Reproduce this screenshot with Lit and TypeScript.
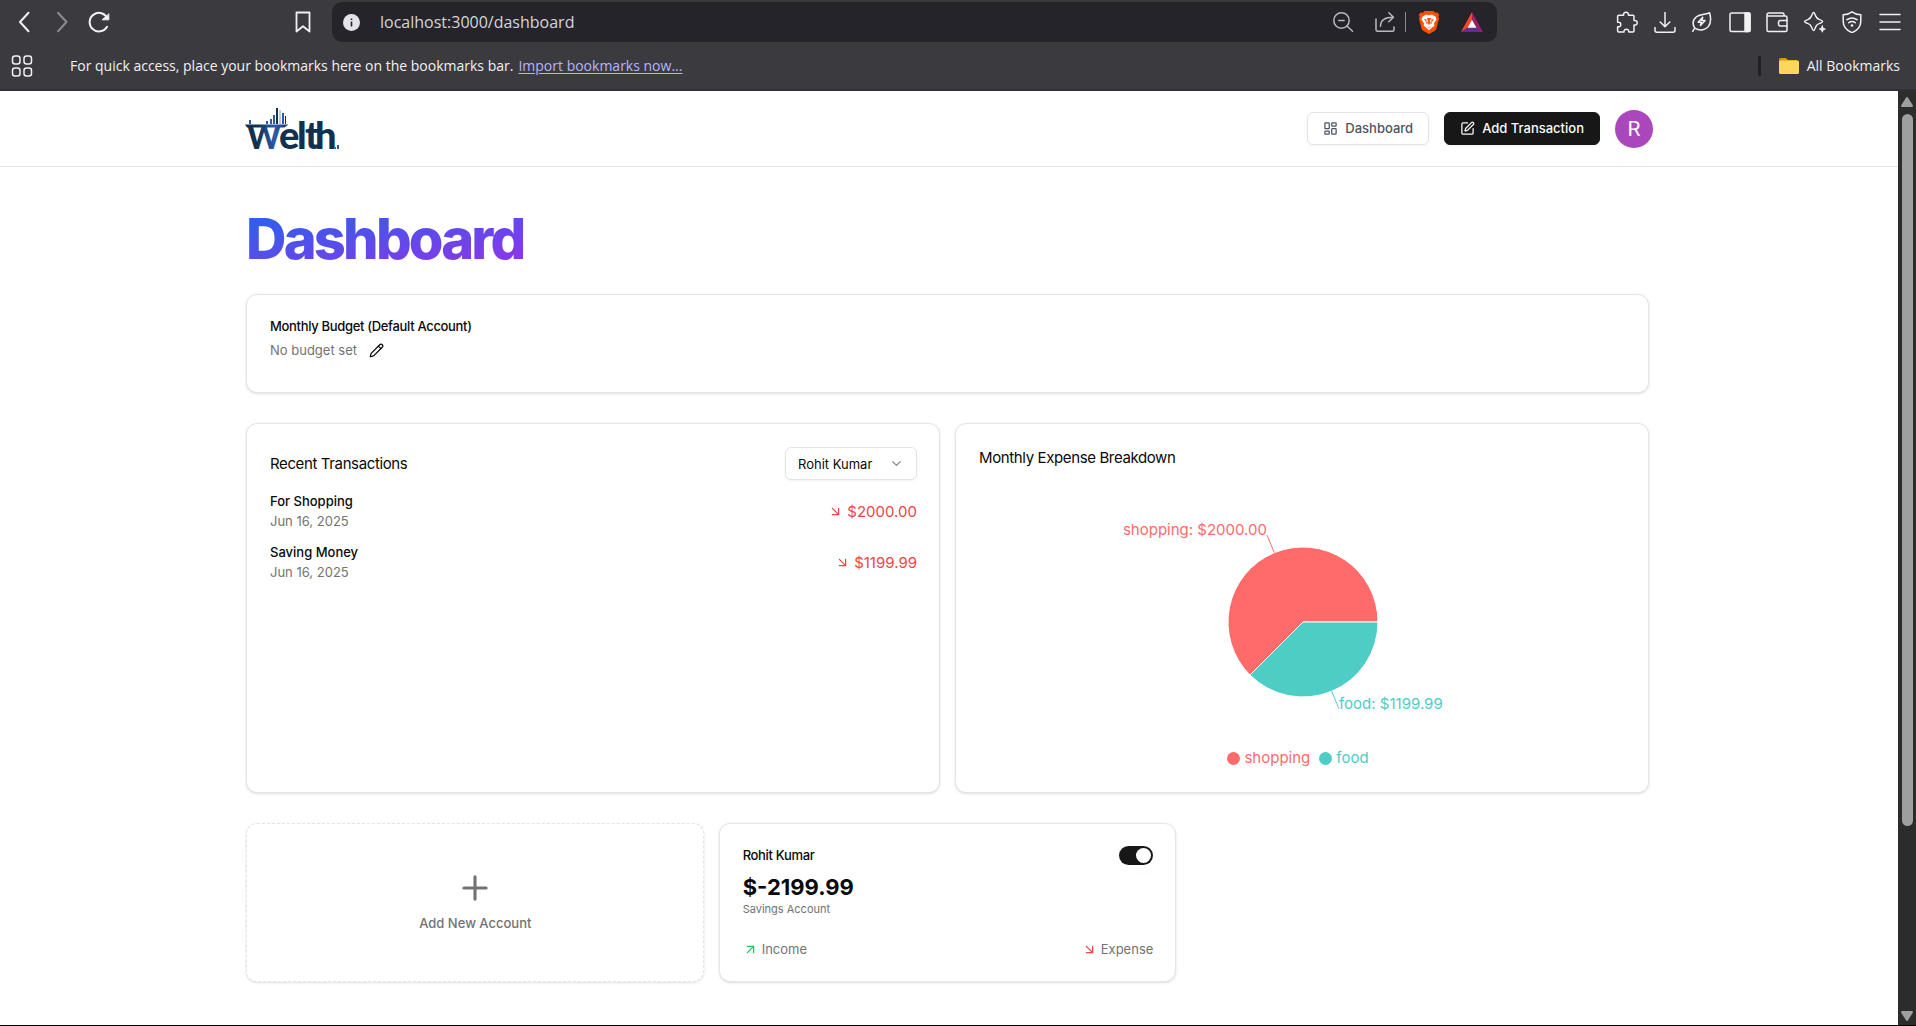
import { LitElement, html, svg, css } from "lit";
import { customElement, property, state } from "lit/decorators.js";

const resets = css`
  *,
  *::before,
  *::after {
    box-sizing: border-box;
  }
  h1,
  h2,
  p,
  ul {
    margin: 0;
    padding: 0;
  }
  ul {
    list-style: none;
  }
  svg {
    display: block;
    flex: none;
  }
  button,
  select,
  input {
    font: inherit;
    color: inherit;
    margin: 0;
  }
`;

/* ---------- Icons ---------- */

const outline = (size: number, body: unknown, width = 2) => html`<svg
  width=${size}
  height=${size}
  viewBox="0 0 24 24"
  fill="none"
  stroke="currentColor"
  stroke-width=${width}
  stroke-linecap="round"
  stroke-linejoin="round"
  aria-hidden="true"
>
  ${body}
</svg>`;

const chrome = (body: unknown, size = 22) => html`<svg
  width=${size}
  height=${size}
  viewBox="0 0 22 22"
  fill="none"
  stroke="currentColor"
  stroke-width="1.5"
  stroke-linecap="round"
  stroke-linejoin="round"
  aria-hidden="true"
>
  ${body}
</svg>`;

const gridIcon = svg`<rect x="3" y="3" width="7" height="9" rx="1"/><rect x="14" y="3" width="7" height="5" rx="1"/><rect x="14" y="12" width="7" height="9" rx="1"/><rect x="3" y="16" width="7" height="5" rx="1"/>`;
const penBox = svg`<path d="M12 3H5a2 2 0 0 0-2 2v14a2 2 0 0 0 2 2h14a2 2 0 0 0 2-2v-7"/><path d="M18.375 2.625a1 1 0 0 1 3 3l-9.013 9.014a2 2 0 0 1-.853.505l-2.873.84a.5.5 0 0 1-.62-.62l.84-2.873a2 2 0 0 1 .506-.852z"/>`;
const pencil = svg`<path d="M21.174 6.812a1 1 0 0 0-3.986-3.987L3.842 16.174a2 2 0 0 0-.5.83l-1.321 4.352a.5.5 0 0 0 .623.622l4.353-1.32a2 2 0 0 0 .83-.497z"/><path d="m15 5 4 4"/>`;
const arrowDown = svg`<path d="m7 7 10 10"/><path d="M17 7v10H7"/>`;
const arrowUp = svg`<path d="M7 7h10v10"/><path d="M7 17 17 7"/>`;
const chevronDown = svg`<path d="m6 9 6 6 6-6"/>`;
const plus = svg`<path d="M5 12h14"/><path d="M12 5v14"/>`;

const toolIcons: Array<[string, unknown]> = [
  [
    "Extensions",
    svg`<path d="M3 4.2h4.600c-.3-2 .7-3 2.400-3s2.700 1 2.400 3H17a1 1 0 0 1 1 1v4.300c2-.3 3.200.6 3.200 2.200S20 14.200 18 13.900v6.200a1 1 0 0 1-1 1h-4.200c.2-1.900-.8-2.800-2.400-2.800s-2.600.9-2.400 2.800H3a1.400 1.400 0 0 1-1.400-1.400v-3.900c2.200.3 3.200-.8 3.200-2.300s-1-2.600-3.200-2.300V5.600A1.400 1.400 0 0 1 3 4.200z"/>`,
  ],
  [
    "Downloads",
    svg`<path d="M11 1.500v14M6.200 11l4.800 4.700 4.800-4.700M1 16.500v2.700a2 2 0 0 0 2 2h16a2 2 0 0 0 2-2v-2.700"/>`,
  ],
  [
    "Energy saver",
    svg`<path d="M1.800 20.300c.5-1.600 1.200-2.300 2-3.100C1.200 13 2 8.700 5.200 6 8.500 3.200 13 4.100 18.600 1.700c1.300 4.700 1.800 10-1.300 13.900-3.100 3.800-8.700 4.500-13.500 1.600"/><path d="M11.700 6.200 7.200 11.300h3.100l-.9 3.300 4.700-5.100h-3.300z"/>`,
  ],
  [
    "Sidebar",
    svg`<rect x="1" y="2" width="20" height="18.500" rx="1.500"/><path d="M16 2h4a1 1 0 0 1 1 1v16.500a1 1 0 0 1-1 1h-4z" fill="currentColor"/>`,
  ],
  [
    "Wallet",
    svg`<path d="M18 5V3.500A1.500 1.500 0 0 0 16.500 2H2.800A1.800 1.800 0 0 0 1 3.800V19a1.500 1.500 0 0 0 1.500 1.500h17A1.500 1.500 0 0 0 21 19V6.500A1.500 1.500 0 0 0 19.500 5H2"/><path d="M21 9.500h-6.500a2 2 0 0 0-2 2V13a2 2 0 0 0 2 2H21"/>`,
  ],
  [
    "Assistant",
    svg`<path d="M9.600 1.500c.9 0 1.200 1 1.800 3.100.8 2.500 1.600 3.200 4.100 4 2 .6 3.100.9 3.100 1.900s-1 1.200-3.100 1.900c-2.500.8-3.300 1.500-4.100 4-.6 2.100-.9 3.100-1.800 3.100s-1.200-1-1.900-3.100c-.8-2.500-1.500-3.200-4-4-2.100-.7-3.100-.9-3.100-1.900s1-1.300 3.100-1.900c2.500-.8 3.200-1.500 4-4 .7-2.100 1-3.100 1.900-3.100z"/><path d="M18.300 15c.5 2 .9 2.500 3 3.100-2.100.6-2.500 1.100-3 3.100-.6-2-1-2.500-3-3.100 2-.6 2.400-1.100 3-3.100z" fill="currentColor" stroke-width="1"/>`,
  ],
  [
    "Shield",
    svg`<path d="M11 .8c2.500 1.900 5.300 2.800 8.800 3v6.500c0 5.300-3.500 9.200-8.800 11.300C5.700 19.500 2.200 15.600 2.200 10.300V3.800c3.500-.2 6.300-1.100 8.800-3z"/><path d="M6 8.700c3.200-2.300 6.800-2.300 10 0M7.800 11.700c2.100-1.500 4.300-1.500 6.400 0"/><circle cx="11" cy="14.500" r="1.300" fill="currentColor" stroke="none"/>`,
  ],
  ["Menu", svg`<path d="M1 3.500h20M1 11h20M1 18.500h20"/>`],
];

/* ---------- Browser frame ---------- */

@customElement("browser-bar")
export class BrowserBar extends LitElement {
  static styles = [
    resets,
    css`
      :host {
        display: block;
        background: #3b3a3f;
        border-bottom: 2px solid #302f35;
        color: #f1f1f4;
        font-family: "Open Sans", "Noto Sans", sans-serif;
      }
      .toolbar {
        display: flex;
        align-items: center;
        height: 42px;
        padding-top: 2px;
      }
      .plain {
        display: grid;
        place-items: center;
        padding: 0;
        border: 0;
        background: none;
      }
      .nav {
        display: flex;
        align-items: center;
        gap: 15px;
        width: 332px;
        padding: 0 18px 0 14px;
      }
      .dim {
        color: #8b8a90;
      }
      .push {
        margin-left: auto;
      }
      .address {
        flex: 1;
        min-width: 0;
        display: flex;
        align-items: center;
        height: 40px;
        padding: 0 13px 0 11px;
        border-radius: 10px;
        background: #25242a;
        color: #b9b9bf;
      }
      .url {
        flex: 1;
        min-width: 0;
        padding: 0;
        margin-left: 20px;
        border: 0;
        outline: 0;
        background: none;
        font-size: 16px;
        line-height: 24px;
        color: #d5d5da;
      }
      .zoomed {
        margin-right: 20px;
      }
      .rule {
        width: 1px;
        height: 20px;
        margin: 0 12px 0 9px;
        background: #8b8a90;
      }
      .brave {
        margin-right: 20px;
      }
      .tools {
        display: flex;
        justify-content: space-between;
        width: 285px;
        margin: 0 15px 0 119px;
      }
      .bookmarks {
        display: flex;
        align-items: center;
        height: 47px;
        padding: 0 16px 0 11px;
        font-size: 14px;
        line-height: 20px;
      }
      .hint {
        margin-left: 37px;
      }
      .import {
        margin-left: 5px;
        color: #b6b5fb;
        text-underline-offset: 2px;
      }
      .bar {
        width: 3px;
        height: 20px;
        margin-left: auto;
        border-radius: 1px;
        background: #212026;
      }
      .all {
        display: flex;
        align-items: center;
        gap: 8px;
        margin-left: 18px;
      }
    `,
  ];

  render() {
    return html`
      <div class="toolbar">
        <div class="nav">
          <button class="plain" aria-label="Back">
            ${chrome(svg`<path d="M14.500 1.800 6 11l8.500 9.200" stroke-width="2"/>`)}
          </button>
          <button class="plain dim" aria-label="Forward">
            ${chrome(svg`<path d="M7 1.800 15.500 11 7 20.200" stroke-width="2"/>`)}
          </button>
          <button class="plain" aria-label="Reload">
            ${chrome(
              svg`<path d="M19 15.800A9.300 9.300 0 1 1 19.500 7.500" stroke-width="2"/><path d="M14.500 8.800h6.300V3.200z" fill="currentColor" stroke-width="1"/>`
            )}
          </button>
          <button class="plain push" aria-label="Bookmark this page">
            ${chrome(svg`<path d="M4.500 1.500h13v19L11 15.300l-6.500 5.200z" stroke-width="1.800"/>`)}
          </button>
        </div>
        <div class="address">
          <svg width="17" height="17" viewBox="0 0 17 17" aria-hidden="true">
            <circle cx="8.500" cy="8.500" r="8.500" fill="#e4e3ea" />
            <path d="M8.500 7.500v5M8.500 4.500v1.400" stroke="#25242a" stroke-width="1.600" />
          </svg>
          <input class="url" aria-label="Address" value="localhost:3000/dashboard" />
          <button class="plain zoomed" aria-label="Zoom">
            ${chrome(svg`<circle cx="9.500" cy="9.500" r="7.700"/><path d="M6.800 9.500h5.400M15 15l5.500 5.200"/>`)}
          </button>
          <button class="plain" aria-label="Share">
            ${chrome(
              svg`<path d="M2 8v10.700A1.500 1.500 0 0 0 3.500 20.200h15a1.500 1.500 0 0 0 1.500-1.500V16M6.500 15.200c0-5.700 3.400-8.900 12.800-8.900M14.800 1.800l4.700 4.500-4.700 4.500"/>`
            )}
          </button>
          <span class="rule"></span>
          <button class="plain brave" aria-label="Brave Shields">
            <svg width="22" height="24" viewBox="0 0 22 24" aria-hidden="true">
              <path
                fill="#ff5000"
                d="M6.500 1h9l1.600 1.800 2.400-.3 1.600 2.300-.7 2 .6 1.900-2.500 9.500c-.4 1.500-1.300 2.300-2.500 3.100L11 24l-5-2.700c-1.200-.8-2.100-1.600-2.500-3.100L1 8.700l.6-1.900-.7-2 1.600-2.300 2.400.3z"
              />
              <path
                fill="#fff"
                d="M11 5.300l3-.8 3.500 2.300 1 2.700-2.600 4 .5 2.200-2.300 1.700L11 20.200l-3.100-2.800-2.300-1.700.5-2.200-2.600-4 1-2.700L8 4.500z"
              />
              <path
                fill="#ff5000"
                d="M5.800 9l3 .7-.5 1.200 1.200 2 .3-2.400-.9-2.500h4.200l-.9 2.500.3 2.400 1.200-2-.5-1.200 3-.7-2.600 3.200.2 1.500-2-.3L11 15.400l-.8-2-2 .3.2-1.500zM8.700 16.500l2.300 1.200 2.300-1.200-2.300 1.900z"
              />
            </svg>
          </button>
          <button class="plain" aria-label="Brave Rewards">
            <svg width="24" height="22" viewBox="0 0 24 22" aria-hidden="true">
              <path fill="#ff4724" d="M12 1v8L7.500 17 1 21z" />
              <path fill="#9e1f63" d="M12 1v8l4.500 8 6.500 4z" />
              <path fill="#662d91" d="M1 21l6.500-4.500h9L23 21z" />
              <path fill="#fff" d="M12 8.700 7.600 16.800h8.800z" />
            </svg>
          </button>
        </div>
        <div class="tools">
          ${toolIcons.map(
            ([name, body]) => html`<button class="plain" aria-label=${name}>${chrome(body)}</button>`
          )}
        </div>
      </div>
      <div class="bookmarks">
        <button class="plain" aria-label="Apps">
          ${chrome(
            svg`<rect x="1.500" y="1" width="7.500" height="8" rx="2.500"/><rect x="13" y="1" width="7.500" height="8" rx="2.500"/><rect x="1.500" y="13" width="7.500" height="8" rx="2.500"/><rect x="13" y="13" width="7.500" height="8" rx="2.500"/>`
          )}
        </button>
        <span class="hint">For quick access, place your bookmarks here on the bookmarks bar.</span>
        <a class="import" href="#import">Import bookmarks now...</a>
        <span class="bar"></span>
        <span class="all">
          <svg width="20" height="16" viewBox="0 0 20 16" aria-hidden="true">
            <path fill="#d9960f" d="M1.500 0h5.300L9 2h9v5H0V1.500A1.500 1.500 0 0 1 1.500 0z" />
            <rect y="2.500" width="20" height="13.500" rx="1.500" fill="#ffd65c" />
          </svg>
          All Bookmarks
        </span>
      </div>
    `;
  }
}

@customElement("scroll-rail")
export class ScrollRail extends LitElement {
  static styles = [
    resets,
    css`
      :host {
        display: flex;
        flex-direction: column;
        align-items: center;
        gap: 7px;
        width: 18px;
        padding: 6px 0 4px;
        background: #2c2c2c;
      }
      .track {
        flex: 1;
        display: flex;
        flex-direction: column;
        width: 11px;
      }
      .thumb {
        height: 80%;
        border-radius: 6px;
        background: #9f9f9f;
      }
    `,
  ];

  render() {
    return html`
      <svg width="12" height="10" viewBox="0 0 12 10"><path fill="#9f9f9f" d="M5 .7a1.200 1.200 0 0 1 2 0l4.800 7.600q.5 1.700-1 1.700H1.200Q-.3 10 .2 8.300z" /></svg>
      <div class="track"><div class="thumb"></div></div>
      <svg width="12" height="10" viewBox="0 0 12 10"><path fill="#9f9f9f" d="M5 9.300a1.200 1.200 0 0 0 2 0l4.800-7.600Q12.300 0 10.800 0H1.200Q-.3 0 .2 1.700z" /></svg>
    `;
  }
}

/* ---------- Site header ---------- */

@customElement("site-header")
export class SiteHeader extends LitElement {
  static styles = [
    resets,
    css`
      :host {
        display: block;
        border-bottom: 1px solid #e5e5e5;
      }
      .inner {
        display: flex;
        align-items: center;
        justify-content: space-between;
        max-width: 1410px;
        height: 75px;
        margin: 0 auto;
        padding: 0 1px;
      }
      .actions {
        display: flex;
        align-items: center;
        gap: 15px;
      }
      .logo {
        overflow: visible;
      }
      .btn {
        display: flex;
        align-items: center;
        gap: 7px;
        height: 33px;
        padding: 0 15px;
        border: 1px solid #e5e5e5;
        border-radius: 6px;
        background: #fff;
        box-shadow: 0 1px 2px rgba(0, 0, 0, 0.05);
        color: #4b5563;
        font-size: 13px;
        font-weight: 500;
        line-height: 19px;
        text-decoration: none;
      }
      .dark {
        border-color: #171717;
        background: #171717;
        color: #fafafa;
      }
      .avatar {
        display: grid;
        place-items: center;
        width: 38px;
        height: 38px;
        padding: 0;
        border: 0;
        border-radius: 50%;
        background: #ab47bc;
        color: #fff;
        font-family: Roboto, sans-serif;
        font-size: 21px;
      }
    `,
  ];

  render() {
    return html`
      <div class="inner">
        <a href="#home" aria-label="Welth home">
          <svg class="logo" width="96" height="60" viewBox="0 -8 96 60">
            <defs>
              <linearGradient id="w" gradientUnits="userSpaceOnUse" x1="0" y1="0" x2="40" y2="0">
                <stop offset="0.3" stop-color="#12304f" />
                <stop offset="0.75" stop-color="#2c5ba8" />
                <stop offset="1" stop-color="#1d3f74" />
              </linearGradient>
            </defs>
            <g fill="#2c5ba8">
              <rect x="4" y="13" width="2" height="4" />
              <rect x="21" y="14" width="2" height="3" />
              <rect x="25" y="12" width="2" height="5" />
              <rect x="28" y="8" width="2" height="9" />
              <rect x="31" y="1" width="2" height="16" fill="#12304f" />
              <rect x="34" y="3" width="2" height="14" fill="#c3c9d6" />
              <rect x="37" y="6" width="2" height="11" />
              <rect x="40" y="9" width="1" height="8" fill="#12304f" />
              <rect x="92" y="38" width="2" height="4" />
              <rect x="90" y="40" width="1" height="2" />
            </g>
            <path fill="url(#w)" d="M0 17.500h43.500l-4 3H2z" />
            <g font-family="Lato, sans-serif" font-weight="900" fill="#12304f">
              <text x="2" y="42" font-size="34" fill="url(#w)"><tspan font-size="32">W</tspan></text>
              <text x="34 52 60 70" y="42" font-size="38">elth</text>
            </g>
          </svg>
        </a>
        <nav class="actions">
          <a class="btn" href="#dashboard">${outline(15, gridIcon)}Dashboard</a>
          <a class="btn dark" href="#create">${outline(15, penBox)}Add Transaction</a>
          <button class="avatar" aria-label="Account menu">R</button>
        </nav>
      </div>
    `;
  }
}

/* ---------- Expense chart ---------- */

interface Slice {
  name: string;
  value: number;
  color: string;
}

@customElement("expense-pie")
export class ExpensePie extends LitElement {
  @property({ attribute: false }) slices: Slice[] = [];

  static styles = [
    resets,
    css`
      :host {
        display: flex;
        flex-direction: column;
        align-items: center;
      }
      .label {
        font-size: 15px;
      }
      .legend {
        display: flex;
        line-height: 22px;
      }
      .item {
        display: flex;
        align-items: center;
        gap: 4px;
        padding-right: 9px;
      }
    `,
  ];

  private point(deg: number, r: number) {
    const a = (deg * Math.PI) / 180;
    return [Math.cos(a) * r, -Math.sin(a) * r];
  }

  render() {
    const total = this.slices.reduce((sum, s) => sum + s.value, 0);
    let from = 0;
    const parts = this.slices.map((s) => {
      const to = from + (s.value / total) * 360;
      const mid = (from + to) / 2;
      const [x1, y1] = this.point(from, 75);
      const [x2, y2] = this.point(to, 75);
      const [ax, ay] = this.point(mid, 75);
      const [bx, by] = this.point(mid, 94);
      const large = to - from > 180 ? 1 : 0;
      from = to;
      return svg`
        <path d="M0 0L${x1} ${y1}A75 75 0 ${large} 0 ${x2} ${y2}Z" fill=${s.color} stroke="#fff" />
        <path d="M${ax} ${ay}L${bx} ${by}" stroke=${s.color} fill="none" />
        <text class="label" x=${Math.round(bx)} y=${Math.round(by)} fill=${s.color}
          text-anchor=${bx < 0 ? "end" : "start"}>${s.name}: $${s.value.toFixed(2)}</text>`;
    });
    return html`
      <svg width="400" height="278" viewBox="-200 -153 400 278" role="img" aria-label="Expenses by category">
        ${parts}
      </svg>
      <ul class="legend">
        ${this.slices.map(
          (s) => html`<li class="item" style="color:${s.color}">
            <svg width="13" height="13" viewBox="0 0 13 13" aria-hidden="true">
              <circle cx="6.500" cy="6.500" r="6.500" fill="currentColor" />
            </svg>
            ${s.name}
          </li>`
        )}
      </ul>
    `;
  }
}

/* ---------- Page ---------- */

@customElement("app-root")
export class AppRoot extends LitElement {
  @state() private transactions = [
    { title: "For Shopping", date: "Jun 16, 2025", amount: 2000 },
    { title: "Saving Money", date: "Jun 16, 2025", amount: 1199.99 },
  ];

  private slices: Slice[] = [
    { name: "shopping", value: 2000, color: "#ff6b6b" },
    { name: "food", value: 1199.99, color: "#4ecdc4" },
  ];

  static styles = [
    resets,
    css`
      :host {
        display: flex;
        flex-direction: column;
        min-height: 100vh;
        border-bottom: 1px solid #000;
        background: #fff;
        color: #0a0a0a;
        font-family: Inter, sans-serif;
        font-size: 15px;
        line-height: 22px;
        box-sizing: border-box;
      }
      .view {
        flex: 1;
        display: flex;
      }
      .page {
        flex: 1;
        min-width: 0;
      }
      .content {
        display: flex;
        flex-direction: column;
        gap: 30px;
        max-width: 1410px;
        margin: 0 auto;
        padding: 44px 5px 32px 2px;
      }
      .top {
        display: flex;
        flex-direction: column;
        align-items: flex-start;
        gap: 27px;
      }
      .title {
        padding-right: 2px;
        background: linear-gradient(to bottom right, #2563eb, #9333ea);
        background-clip: text;
        -webkit-background-clip: text;
        color: transparent;
        font-size: 56px;
        font-weight: 800;
        line-height: 56px;
        letter-spacing: -0.05em;
      }
      .card {
        padding: 23px 22px 23px 23px;
        border: 1px solid #e5e5e5;
        border-radius: 11px;
        background: #fff;
        box-shadow: 0 1px 3px rgba(0, 0, 0, 0.1), 0 1px 2px -1px rgba(0, 0, 0, 0.1);
      }
      .budget {
        align-self: stretch;
        padding-top: 22px;
        padding-bottom: 28px;
      }
      .strong {
        font-size: 13px;
        font-weight: 500;
        line-height: 19px;
      }
      .tight {
        letter-spacing: -0.025em;
      }
      .small {
        font-size: 13px;
        line-height: 19px;
      }
      .muted {
        color: #737373;
      }
      .unset {
        display: flex;
        align-items: center;
        height: 28px;
        gap: 5px;
      }
      .edit {
        display: grid;
        place-items: center;
        width: 28px;
        height: 28px;
        padding: 0;
        border: 0;
        background: none;
      }
      .heading {
        font-size: 15px;
        font-weight: 400;
        line-height: 22px;
      }
      .halves {
        display: grid;
        grid-template-columns: repeat(2, 1fr);
        gap: 15px;
      }
      .thirds {
        display: grid;
        grid-template-columns: repeat(3, 1fr);
        gap: 15px;
      }
      .split {
        display: flex;
        align-items: center;
        justify-content: space-between;
      }
      .picker {
        display: grid;
        align-items: center;
        width: 132px;
      }
      .select {
        grid-area: 1 / 1;
        appearance: none;
        width: 100%;
        height: 33px;
        padding: 0 30px 0 12px;
        border: 1px solid #e5e5e5;
        border-radius: 6px;
        background: #fff;
        box-shadow: 0 1px 2px rgba(0, 0, 0, 0.05);
        font-size: 13px;
      }
      .caret {
        grid-area: 1 / 1;
        justify-self: end;
        margin-right: 13px;
        color: #858585;
        pointer-events: none;
      }
      .list {
        display: flex;
        flex-direction: column;
        gap: 12px;
        margin-top: 12px;
      }
      .lines {
        display: flex;
        flex-direction: column;
        gap: 1px;
      }
      .amount {
        display: flex;
        align-items: center;
        gap: 4px;
        color: #ef4444;
      }
      .account {
        padding-top: 22px;
        padding-bottom: 22px;
      }
      .add {
        display: flex;
        flex-direction: column;
        align-items: center;
        justify-content: center;
        gap: 7px;
        padding-bottom: 27px;
        border-style: dashed;
        color: #737373;
      }
      .switch {
        appearance: none;
        display: flex;
        justify-content: flex-end;
        width: 34px;
        height: 19px;
        padding: 2px;
        border-radius: 10px;
        background: #171717;
      }
      .switch::before {
        content: "";
        width: 15px;
        height: 15px;
        border-radius: 50%;
        background: #fff;
        box-shadow: 0 10px 14px -3px rgba(0, 0, 0, 0.06);
      }
      .switch:not(:checked) {
        justify-content: flex-start;
        background: #e5e5e5;
      }
      .balance {
        margin-top: 7px;
        font-size: 22px;
        font-weight: 700;
        line-height: 30px;
      }
      .kind {
        font-size: 11px;
        line-height: 15px;
      }
      .flows {
        margin-top: 23px;
      }
      .flow {
        display: flex;
        align-items: center;
        gap: 4px;
      }
      .green {
        color: #22c55e;
      }
      .red {
        color: #ef4444;
      }
    `,
  ];

  render() {
    return html`
      <browser-bar></browser-bar>
      <div class="view">
        <div class="page">
          <site-header></site-header>
          <main class="content">
            <div class="top">
              <h1 class="title">Dashboard</h1>
              <section class="card budget">
                <h2 class="strong tight">Monthly Budget (Default Account)</h2>
                <div class="unset">
                  <p class="small muted">No budget set</p>
                  <button class="edit" aria-label="Edit budget">${outline(15, pencil)}</button>
                </div>
              </section>
            </div>

            <div class="halves">
              <section class="card">
                <div class="split">
                  <h2 class="heading tight">Recent Transactions</h2>
                  <div class="picker">
                    <select class="select" aria-label="Account">
                      <option>Rohit Kumar</option>
                    </select>
                    <span class="caret">${outline(15, chevronDown)}</span>
                  </div>
                </div>
                <ul class="list">
                  ${this.transactions.map(
                    (t) => html`<li class="split">
                      <div class="lines">
                        <p class="strong">${t.title}</p>
                        <p class="small muted">${t.date}</p>
                      </div>
                      <p class="amount">${outline(15, arrowDown)}<span>$${t.amount.toFixed(2)}</span></p>
                    </li>`
                  )}
                </ul>
              </section>
              <section class="card">
                <h2 class="heading tight">Monthly Expense Breakdown</h2>
                <expense-pie .slices=${this.slices}></expense-pie>
              </section>
            </div>

            <div class="thirds">
              <button class="card add">
                ${outline(38, plus)}
                <span class="strong">Add New Account</span>
              </button>
              <section class="card account">
                <div class="split">
                  <label class="strong tight" for="default">Rohit Kumar</label>
                  <input class="switch" id="default" type="checkbox" role="switch" checked />
                </div>
                <p class="balance">$-2199.99</p>
                <p class="kind muted">Savings Account</p>
                <div class="split flows small muted">
                  <span class="flow"><span class="green">${outline(15, arrowUp)}</span>Income</span>
                  <span class="flow"><span class="red">${outline(15, arrowDown)}</span>Expense</span>
                </div>
              </section>
            </div>
          </main>
        </div>
        <scroll-rail></scroll-rail>
      </div>
    `;
  }
}
